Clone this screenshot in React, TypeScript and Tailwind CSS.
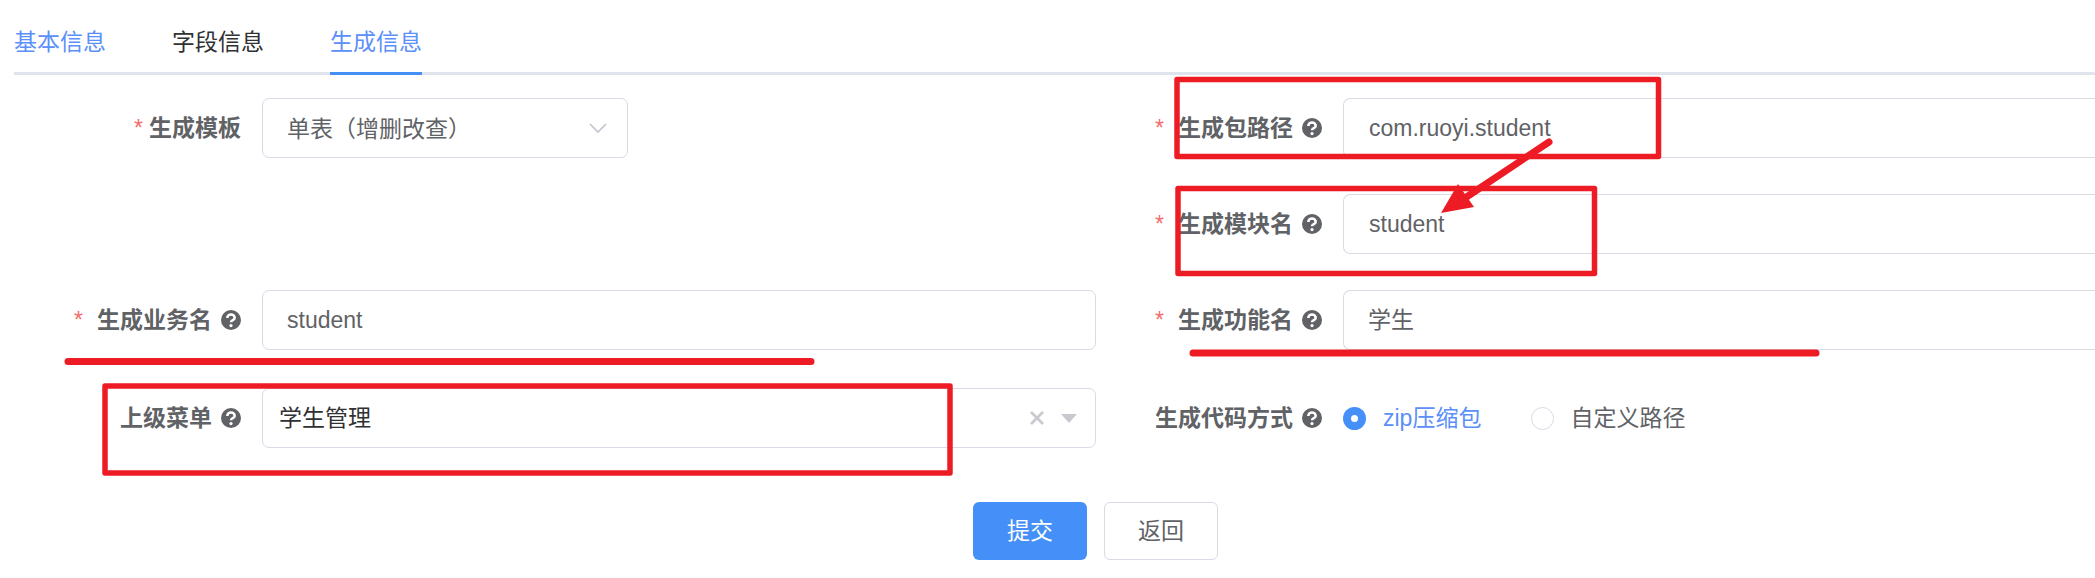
import React from "react";

const FONT = "font-['Liberation_Sans','Noto_Sans_CJK_SC',sans-serif]";

function Help() {
  return (
    <svg width="20" height="20" viewBox="0 0 20 20" className="shrink-0">
      <circle cx="10" cy="10" r="10" fill="#606266" />
      <path d="M6.3 7.900a3.700 3.400 0 0 1 7.400 0c0 2.200-3.700 2.300-3.700 4.300" fill="none" stroke="#fff" strokeWidth="2.500" />
      <circle cx="10" cy="15.600" r="1.600" fill="#fff" />
    </svg>
  );
}

function Label({
  width,
  star,
  starGap,
  help,
  children,
}: {
  width: string;
  star?: boolean;
  starGap?: string;
  help?: boolean;
  children: React.ReactNode;
}) {
  return (
    <div className={`flex items-center justify-end shrink-0 pr-[21px] ${width}`}>
      {star && <span className={`text-[#f56c6c] font-normal leading-none ${starGap}`}>*</span>}
      <span className="font-bold text-[#606266]">{children}</span>
      {help && (
        <span className="ml-[9px] flex">
          <Help />
        </span>
      )}
    </div>
  );
}

function Box({ open, children }: { open?: boolean; children: React.ReactNode }) {
  return (
    <div
      className={`flex-1 h-[60px] flex items-center bg-white border border-[#d8dbe6] ${
        open ? "border-r-0 rounded-l-[7px]" : "rounded-[7px]"
      }`}
    >
      {children}
    </div>
  );
}

export default function App() {
  return (
    <div className={`relative w-[2095px] h-[578px] overflow-hidden bg-white text-[23px] leading-[30px] ${FONT}`}>
      <div className="pl-[14px]">
        <div className="flex h-[75px] border-b-[3px] border-[#dfe4ed] gap-[66px]">
          <div className="h-[75px] pt-[27px] text-[#5b8ff9] leading-[30px]">基本信息</div>
          <div className="h-[75px] pt-[27px] text-[#303133] leading-[30px]">字段信息</div>
          <div className="h-[75px] pt-[27px] text-[#5b8ff9] leading-[30px] border-b-[3px] border-[#4490f8]">生成信息</div>
        </div>
      </div>

      <div className="pt-[23px]">
        <div className="flex h-[60px]">
          <div className="flex w-[1096px] items-center">
            <Label width="w-[262px]" star starGap="mr-[6px]">生成模板</Label>
            <div className="w-[366px] h-[60px] flex items-center justify-between pl-[24px] pr-[19px] border border-[#d8dbe6] rounded-[7px]">
              <span className="pt-[2px] text-[#606266]">单表（增删改查）</span>
              <svg width="20" height="12" viewBox="0 0 20 12" fill="none" stroke="#c0c4cc" strokeWidth="1.600">
                <path d="M2 2l8 8 8-8" />
              </svg>
            </div>
          </div>
          <div className="flex flex-1 items-center">
            <Label width="w-[247px]" star starGap="mr-[14px]" help>生成包路径</Label>
            <Box open><span className="pl-[25px] text-[#606266]">com.ruoyi.student</span></Box>
          </div>
        </div>

        <div className="flex h-[60px] mt-[36px]">
          <div className="w-[1096px]" />
          <div className="flex flex-1 items-center">
            <Label width="w-[247px]" star starGap="mr-[14px]" help>生成模块名</Label>
            <Box open><span className="pl-[25px] text-[#606266]">student</span></Box>
          </div>
        </div>

        <div className="flex h-[60px] mt-[36px]">
          <div className="flex w-[1096px] items-center">
            <Label width="w-[262px]" star starGap="mr-[14px]" help>生成业务名</Label>
            <Box><span className="pl-[24px] text-[#606266]">student</span></Box>
          </div>
          <div className="flex flex-1 items-center">
            <Label width="w-[247px]" star starGap="mr-[14px]" help>生成功能名</Label>
            <Box open><span className="pl-[24px] text-[#606266]">学生</span></Box>
          </div>
        </div>

        <div className="flex h-[60px] mt-[38px]">
          <div className="flex w-[1096px] items-center">
            <Label width="w-[262px]" help>上级菜单</Label>
            <Box>
              <span className="pl-[16px] flex-1 text-[#303133]">学生管理</span>
              <svg width="14" height="14" viewBox="0 0 14 14" stroke="#c8cacf" strokeWidth="2.800" className="mr-[17px]">
                <path d="M1 1l12 12M13 1L1 13" />
              </svg>
              <svg width="16" height="9" viewBox="0 0 16 9" className="mr-[18px]">
                <path d="M0 0h16L8 9z" fill="#c8cacf" />
              </svg>
            </Box>
          </div>
          <div className="flex flex-1 items-center">
            <Label width="w-[247px]" help>生成代码方式</Label>
            <div className="flex items-center">
              <span className="w-[23px] h-[23px] rounded-full bg-[#4490f8] flex items-center justify-center">
                <span className="w-[7px] h-[7px] rounded-full bg-white" />
              </span>
              <span className="ml-[17px] text-[#5b8ff9]">zip压缩包</span>
              <span className="ml-[50px] w-[23px] h-[23px] rounded-full border border-[#d8dbe6] bg-white" />
              <span className="ml-[16px] text-[#606266]">自定义路径</span>
            </div>
          </div>
        </div>

        <div className="flex mt-[54px] pl-[973px] gap-[17px]">
          <div className="w-[114px] h-[58px] rounded-[6px] bg-[#4490f8] text-white flex items-center justify-center">提交</div>
          <div className="w-[114px] h-[58px] rounded-[6px] border border-[#d8dbe6] text-[#606266] bg-white flex items-center justify-center">返回</div>
        </div>
      </div>

      <svg className="absolute inset-0 pointer-events-none" width="2095" height="578" viewBox="0 0 2095 578" fill="none" stroke="#ed1c24">
        <rect x="1177" y="79.500" width="481.500" height="77" strokeWidth="5.500" strokeLinejoin="round" />
        <rect x="1178" y="188.500" width="416.500" height="85" strokeWidth="5.500" strokeLinejoin="round" />
        <rect x="105" y="386" width="845" height="87" strokeWidth="5.500" strokeLinejoin="round" />
        <path d="M68 361.500H811" strokeWidth="7" strokeLinecap="round" />
        <path d="M1193 353H1816" strokeWidth="7" strokeLinecap="round" />
        <path d="M1549 142L1462 200" strokeWidth="7" strokeLinecap="round" />
        <path d="M1441 213L1458 184L1474 207Z" fill="#ed1c24" stroke="none" />
      </svg>
    </div>
  );
}
